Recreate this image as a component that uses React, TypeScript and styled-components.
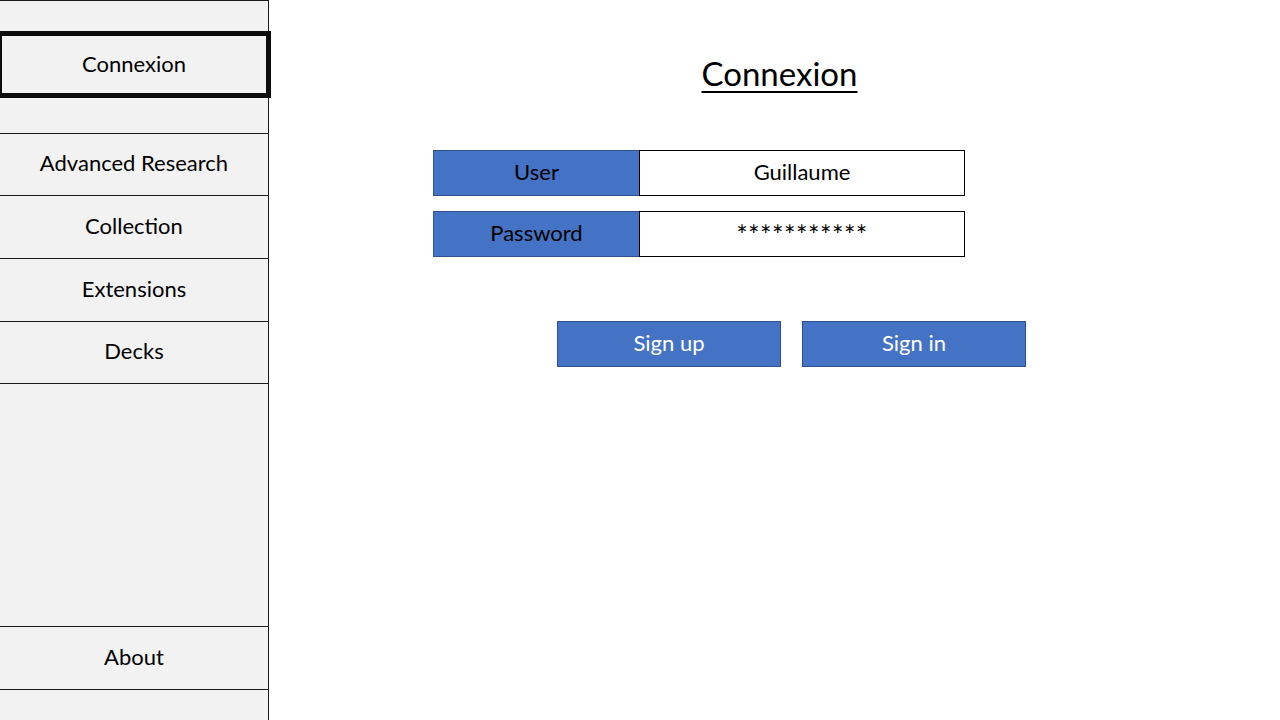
import React from "react";
import styled, { createGlobalStyle } from "styled-components";

const GlobalStyle = createGlobalStyle`
  html, body { margin: 0; padding: 0; background: #ffffff; }
  body { font-family: "Lato", "Open Sans", sans-serif; color: #000; }
  * { box-sizing: border-box; }
`;

const Page = styled.div`
  display: flex;
  width: 1280px;
  height: 720px;
  overflow: hidden;
`;

const Sidebar = styled.nav`
  width: 269px;
  flex: 0 0 269px;
  height: 720px;
  background: #f2f2f2;
  border-top: 1px solid #1a1a1a;
  border-right: 1px solid #1a1a1a;
  display: flex;
  flex-direction: column;
  position: relative;
  z-index: 1;
`;

const Gap = styled.div<{ $h?: number }>`
  flex: ${(p) => (p.$h ? `0 0 ${p.$h}px` : "1 1 auto")};
`;

const NavItem = styled.div<{ $h?: number; $last?: boolean }>`
  flex: ${(p) => (p.$h ? `0 0 ${p.$h}px` : "1 1 auto")};
  border-top: 1px solid #1a1a1a;
  border-bottom: ${(p) => (p.$last ? "1px solid #1a1a1a" : "none")};
  display: flex;
  align-items: center;
  justify-content: center;
  padding-bottom: 4px;
  font-size: 22px;
`;

const ActiveItem = styled.div`
  flex: 0 0 67px;
  margin: 0 -3px 0 -3px;
  border: 5px solid #0d0d0d;
  display: flex;
  align-items: center;
  justify-content: center;
  padding-bottom: 3px;
  font-size: 22px;
  background: #f2f2f2;
`;

const Main = styled.main`
  flex: 1 1 auto;
  display: flex;
  flex-direction: column;
`;

const Title = styled.h1`
  margin: 51px 0 0 0;
  padding-left: 10px;
  text-align: center;
  font-size: 33px;
  font-weight: 400;
  text-decoration: underline;
  text-underline-offset: 5px;
  text-decoration-thickness: 2px;
  line-height: 44px;
`;

const Form = styled.div`
  margin: 55px 0 0 164px;
  display: flex;
  flex-direction: column;
  gap: 15px;
`;

const Row = styled.div`
  display: flex;
  height: 46px;
`;

const Label = styled.div`
  width: 207px;
  background: #4472c4;
  border: 1px solid #2f528f;
  display: flex;
  align-items: center;
  justify-content: center;
  padding-bottom: 3px;
  font-size: 22px;
`;

const Value = styled.div<{ $secret?: boolean }>`
  width: 326px;
  margin-left: -1px;
  background: #fff;
  border: 1px solid #000;
  display: flex;
  align-items: ${(p) => (p.$secret ? "flex-start" : "center")};
  padding-top: ${(p) => (p.$secret ? "9px" : "0")};
  padding-bottom: ${(p) => (p.$secret ? "0" : "3px")};
  justify-content: center;
  font-size: ${(p) => (p.$secret ? "27px" : "22px")};
  line-height: ${(p) => (p.$secret ? "27px" : "normal")};
  letter-spacing: ${(p) => (p.$secret ? "0.5px" : "0")};
  color: #000;
`;

const Actions = styled.div`
  margin: 64px 0 0 288px;
  display: flex;
  gap: 21px;
`;

const Button = styled.button`
  width: 224px;
  height: 46px;
  background: #4472c4;
  border: 1px solid #2f528f;
  color: #fff;
  font-family: inherit;
  font-size: 22px;
  padding: 0 0 3px 0;
  cursor: pointer;
`;

export default function App() {
  return (
    <>
      <GlobalStyle />
      <Page>
        <Sidebar>
          <Gap $h={30} />
          <ActiveItem>Connexion</ActiveItem>
          <Gap $h={35} />
          <NavItem $h={62}>Advanced Research</NavItem>
          <NavItem $h={63}>Collection</NavItem>
          <NavItem $h={63}>Extensions</NavItem>
          <NavItem $h={62}>Decks</NavItem>
          <NavItem />
          <NavItem $h={64} $last>About</NavItem>
          <Gap $h={30} />
        </Sidebar>
        <Main>
          <Title>Connexion</Title>
          <Form>
            <Row>
              <Label>User</Label>
              <Value>Guillaume</Value>
            </Row>
            <Row>
              <Label>Password</Label>
              <Value $secret>***********</Value>
            </Row>
          </Form>
          <Actions>
            <Button>Sign up</Button>
            <Button>Sign in</Button>
          </Actions>
        </Main>
      </Page>
    </>
  );
}
